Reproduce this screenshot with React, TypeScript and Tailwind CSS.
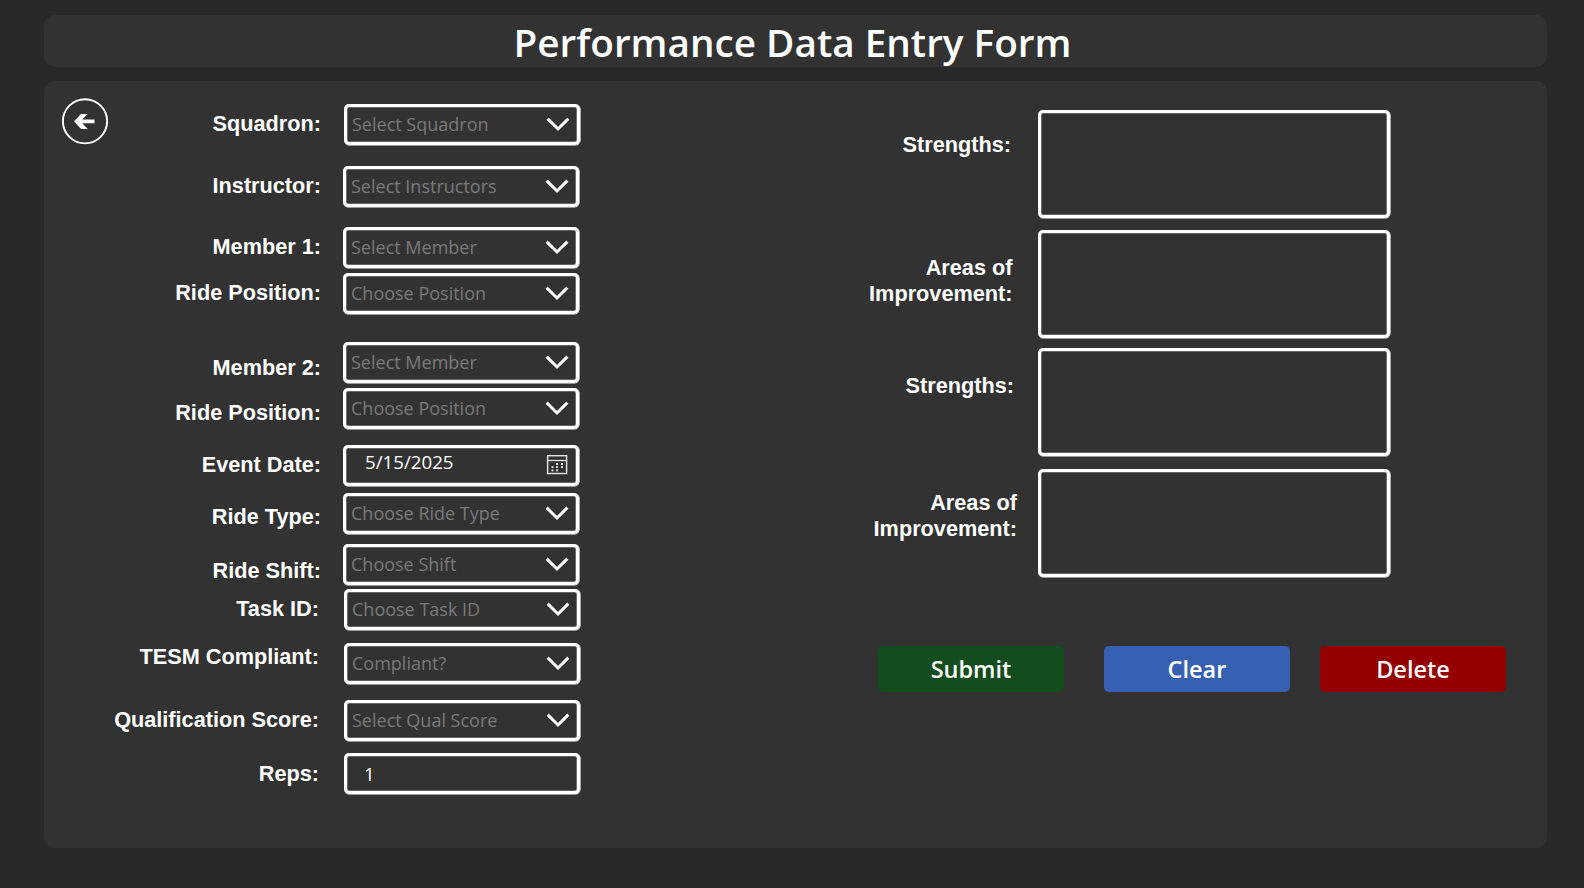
import React from "react";

type Field = {
  label: string;
  text: string;
  kind?: "select" | "date" | "text";
  row: string;
  labelPad: string;
  labelBox: string;
};

const fields: Field[] = [
  { label: "Squadron:", text: "Select Squadron", row: "h-[62px]", labelPad: "pt-[7px]", labelBox: "w-[277px] mr-[23px]" },
  { label: "Instructor:", text: "Select Instructors", row: "h-[61px]", labelPad: "pt-[7px]", labelBox: "w-[277px] mr-[22px]" },
  { label: "Member 1:", text: "Select Member", row: "h-[46px]", labelPad: "pt-[7px]", labelBox: "w-[277px] mr-[22px]" },
  { label: "Ride Position:", text: "Choose Position", row: "h-[69px]", labelPad: "pt-[7px]", labelBox: "w-[277px] mr-[22px]" },
  { label: "Member 2:", text: "Select Member", row: "h-[46px]", labelPad: "pt-[13px]", labelBox: "w-[277px] mr-[22px]" },
  { label: "Ride Position:", text: "Choose Position", row: "h-[57px]", labelPad: "pt-[12px]", labelBox: "w-[277px] mr-[22px]" },
  { label: "Event Date:", text: "5/15/2025", kind: "date", row: "h-[48px]", labelPad: "pt-[7px]", labelBox: "w-[277px] mr-[22px]" },
  { label: "Ride Type:", text: "Choose Ride Type", row: "h-[51px]", labelPad: "pt-[11px]", labelBox: "w-[277px] mr-[22px]" },
  { label: "Ride Shift:", text: "Choose Shift", row: "h-[45px]", labelPad: "pt-[14px]", labelBox: "w-[277px] mr-[22px]" },
  { label: "Task ID:", text: "Choose Task ID", row: "h-[54px]", labelPad: "pt-[7px]", labelBox: "w-[275px] mr-[25px]" },
  { label: "TESM Compliant:", text: "Compliant?", row: "h-[57px]", labelPad: "pt-px", labelBox: "w-[275px] mr-[25px]" },
  { label: "Qualification Score:", text: "Select Qual Score", row: "h-[53px]", labelPad: "pt-[7px]", labelBox: "w-[275px] mr-[25px]" },
  { label: "Reps:", text: "1", kind: "text", row: "h-[42px]", labelPad: "pt-[8px]", labelBox: "w-[275px] mr-[25px]" },
];

const notes = [
  { lines: ["Strengths:"], row: "h-[120px]", pad: "pt-[22px]", box: "w-[212px] mr-[27px]" },
  { lines: ["Areas of", "Improvement:"], row: "h-[118px]", pad: "pt-[25px]", box: "w-[213.5px] mr-[25.5px]" },
  { lines: ["Strengths:"], row: "h-[121px]", pad: "pt-[25px]", box: "w-[215px] mr-[24px]" },
  { lines: ["Areas of", "Improvement:"], row: "h-[109px]", pad: "pt-[21px]", box: "w-[218px] mr-[21px]" },
];

const labelFont = 'font-["Liberation_Sans",Arial,sans-serif] text-[21.7px] leading-[25.8px] font-bold';
const outline = "rounded-[5px] border-[3px] border-white shadow-[0.3px_0.3px_0_0.3px_#fff,inset_0_0_0_0.3px_#fff]";

function Chevron() {
  return (
    <svg className="mt-[9px] mr-[7px] h-[16px] w-[24px]" viewBox="0 0 24 16" fill="none" stroke="white" strokeWidth="3">
      <path d="M1.6 2.6 L12 13 L22.4 2.6" />
    </svg>
  );
}

function Calendar() {
  return (
    <svg className="mt-[7px] mr-[8px] h-[20px] w-[22px]" viewBox="0 0 22 20" fill="none" stroke="#e6e6e6">
      <rect x="1.6" y="0.7" width="19" height="17.8" strokeWidth="1.4" />
      <path d="M1.5 5.5H20.5" strokeWidth="1.3" />
      <path d="M10 9h2M15 9h2M5.5 12.2h2M10 12.2h2M15 12.2h2M5.5 15.4h2M10 15.4h2" strokeWidth="1.8" />
    </svg>
  );
}

function Control({ field }: { field: Field }) {
  const kind = field.kind ?? "select";
  return (
    <div className={"flex h-[41px] w-[236px] items-start justify-between " + outline}>
      {kind === "select" && <span className="pl-[5px] pt-[4px] text-[18px] leading-[26px] text-[#7a7a7a]">{field.text}</span>}
      {kind === "date" && <span className="pl-[19px] pt-[1px] text-[18.7px] leading-[26px] text-white">{field.text}</span>}
      {kind === "text" && <span className="pl-[17px] pt-[5px] text-[18.7px] leading-[26px] text-white">{field.text}</span>}
      {kind === "select" && <Chevron />}
      {kind === "date" && <Calendar />}
    </div>
  );
}

export default function App() {
  return (
    <div className='flex h-[888px] w-[1584px] flex-col gap-[14px] bg-[#292929] pl-[44px] pt-[15px] font-["Open_Sans","Noto_Sans",sans-serif] text-white'>
      <header className="flex h-[52px] w-[1503px] items-center justify-center rounded-[11px] bg-[#323232] pt-[3px] pr-[6px]">
        <h1 className="text-[38.7px] leading-[49px] font-semibold whitespace-nowrap">Performance Data Entry Form</h1>
      </header>
      <main className="flex h-[767px] w-[1503px] items-start rounded-[11px] bg-[#323232]">
        <button className="mt-[17px] ml-[18px] h-[47px] w-[46px] shrink-0" aria-label="Back">
          <svg className="h-[47px] w-[46px]" viewBox="0 0 46 47" fill="none" stroke="white">
            <circle cx="23" cy="23.3" r="22.1" strokeWidth="1.9" />
            <path d="M12 23.3L19 16H25.8L20.2 21.5H32.5V25.2H20.2L25.8 31H19Z" fill="white" stroke="none" />
          </svg>
        </button>
        <section className="mt-[23px] -ml-[64px] w-[537px]">
          {fields.map((field, i) => (
            <div key={i} className={"flex items-start " + field.row}>
              <label className={labelFont + " shrink-0 text-right whitespace-nowrap " + field.labelBox + " " + field.labelPad}>{field.label}</label>
              <Control field={field} />
            </div>
          ))}
        </section>
        <section className="mt-[29px] ml-[218px] w-[711px]">
          {notes.map((note, i) => (
            <div key={i} className={"flex items-start " + note.row}>
              <div className={labelFont + " shrink-0 text-right " + note.box + " " + note.pad}>
                {note.lines.map((line) => (
                  <div key={line}>{line}</div>
                ))}
              </div>
              <div className={"h-[108px] w-[352px] " + outline} />
            </div>
          ))}
          <div className="mt-[68px] ml-[79px] flex text-[23.5px] leading-[46px] font-semibold">
            <button className="h-[46px] w-[186px] rounded-[5px] bg-[#134d1d]">Submit</button>
            <button className="ml-[40px] h-[46px] w-[186px] rounded-[5px] bg-[#3860b2]">Clear</button>
            <button className="ml-[30px] h-[46px] w-[186px] rounded-[5px] bg-[#940000]">Delete</button>
          </div>
        </section>
      </main>
    </div>
  );
}
